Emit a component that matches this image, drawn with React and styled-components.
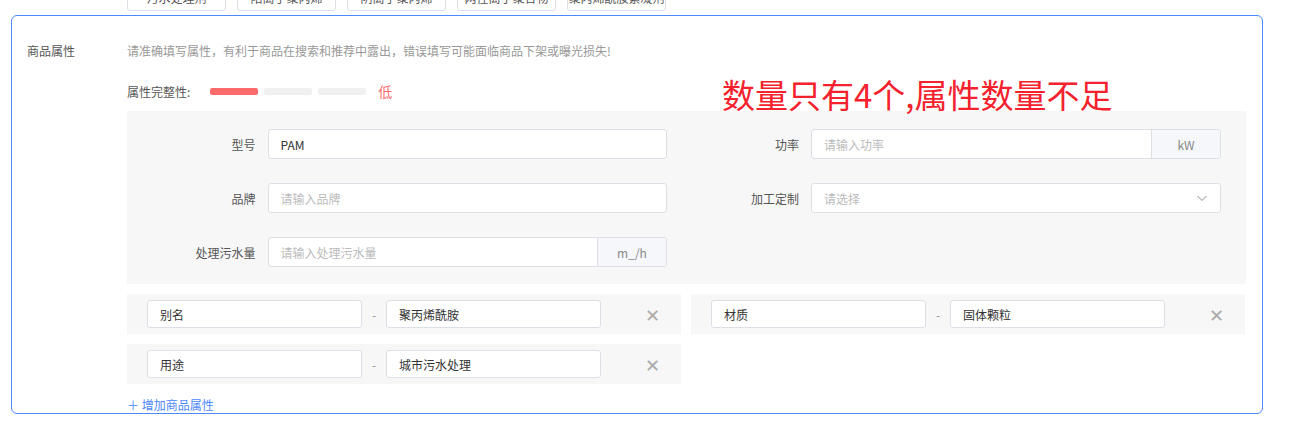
import styled, { createGlobalStyle } from 'styled-components';

const Global = createGlobalStyle`
  body { margin: 0; background: #fff; font-family: "Noto Sans CJK SC", "Liberation Sans", sans-serif; font-size: 12px; color: #333; }
`;

const Page = styled.div`
  height: 425px;
  overflow: hidden;
  position: relative;
`;

const TopBar = styled.div`
  display: flex;
  gap: 11px;
  padding-left: 127px;
  height: 11px;
  overflow: hidden;
`;

const TopBtn = styled.div`
  width: 99px;
  height: 28px;
  margin-top: -17px;
  border: 1px solid #dcdfe6;
  border-radius: 3px;
  display: flex;
  align-items: center;
  justify-content: center;
  font-size: 12px;
  color: #555;
  box-sizing: border-box;
  overflow: hidden;
  white-space: nowrap;
`;

const Card = styled.div`
  margin: 4px 0 0 11px;
  width: 1252px;
  height: 399px;
  box-sizing: border-box;
  border: 1px solid #4d88ff;
  border-radius: 6px;
  display: flex;
  padding: 26px 16px 0 15px;
`;

const SideLabel = styled.div`
  width: 100px;
  flex-shrink: 0;
  color: #555;
  line-height: 18px;
`;

const Body = styled.div`
  flex: 1;
  display: flex;
  flex-direction: column;
`;

const Hint = styled.div`
  color: #999;
  line-height: 18px;
`;

const Meter = styled.div`
  display: flex;
  align-items: center;
  margin-top: 22px;
  height: 18px;
  color: #555;
`;

const MeterLabel = styled.span`
  margin-right: 20px;
`;

const Seg = styled.div`
  width: 48px;
  height: 7px;
  border-radius: 2px;
  margin-right: 6px;
  background: ${p => (p.$on ? '#ff6b6b' : '#f0f0f0')};
`;

const Low = styled.span`
  color: #ff6b6b;
  font-size: 14px;
  margin-left: 6px;
`;

const Panel = styled.div`
  margin-top: 11px;
  background: #f7f7f7;
  height: 180px;
  box-sizing: border-box;
  padding-top: 18px;
  display: grid;
  grid-template-columns: 540px 554px;
  grid-auto-rows: 30px;
  row-gap: 24px;
`;

const Field = styled.div`
  display: flex;
  align-items: center;
`;

const FLabel = styled.div`
  width: 144px;
  padding-right: 12px;
  box-sizing: border-box;
  text-align: right;
  color: #555;
`;

const InputBox = styled.div`
  width: 410px;
  height: 30px;
  box-sizing: border-box;
  border: 1px solid #dcdfe6;
  border-radius: 3px;
  background: #fff;
  display: flex;
  align-items: center;
  overflow: hidden;
`;

const InText = styled.div`
  flex: 1;
  padding-left: 12px;
  color: ${p => (p.$ph ? '#bbb' : '#333')};
`;

const Addon = styled.div`
  width: 68px;
  height: 100%;
  background: #f5f7fa;
  border-left: 1px solid #dcdfe6;
  display: flex;
  align-items: center;
  justify-content: center;
  color: #888;
`;

const Custom = styled.div`
  margin-top: 10px;
  display: grid;
  grid-template-columns: 554px 554px;
  column-gap: 10px;
  row-gap: 10px;
`;

const CRow = styled.div`
  background: #f7f7f7;
  height: 40px;
  display: flex;
  align-items: center;
  padding-left: 20px;
`;

const Small = styled(InputBox)`
  width: 215px;
  height: 28px;
`;

const Dash = styled.div`
  width: 24px;
  text-align: center;
  color: #999;
`;

const Close = styled.div`
  margin-left: 44px;
  color: #aaa;
  font-size: 18px;
  line-height: 1;
`;

const AddLink = styled.div`
  margin-top: 13px;
  color: #4d88ff;
  line-height: 16px;
`;

const Note = styled.div`
  position: absolute;
  left: 722px;
  top: 70px;
  color: #f5222d;
  font-size: 33px;
`;

const fields = [
  { l: '型号', v: 'PAM' },
  { l: '功率', v: '请输入功率', ph: true, unit: 'kW' },
  { l: '品牌', v: '请输入品牌', ph: true },
  { l: '加工定制', v: '请选择', ph: true, sel: true },
  { l: '处理污水量', v: '请输入处理污水量', ph: true, unit: 'm_/h' },
];

const customs = [
  ['别名', '聚丙烯酰胺'],
  ['材质', '固体颗粒'],
  ['用途', '城市污水处理'],
];

export default function App() {
  return (
    <Page>
      <Global />
      <TopBar>
        {['污水处理剂', '阳离子聚丙烯', '阴离子聚丙烯', '两性离子聚合物', '聚丙烯酰胺絮凝剂'].map(t => (
          <TopBtn key={t}>{t}</TopBtn>
        ))}
      </TopBar>
      <Card>
        <SideLabel>商品属性</SideLabel>
        <Body>
          <Hint>请准确填写属性，有利于商品在搜索和推荐中露出，错误填写可能面临商品下架或曝光损失!</Hint>
          <Meter>
            <MeterLabel>属性完整性:</MeterLabel>
            <Seg $on /><Seg /><Seg />
            <Low>低</Low>
          </Meter>
          <Panel>
            {fields.map(f => (
              <Field key={f.l}>
                <FLabel>{f.l}</FLabel>
                <InputBox>
                  <InText $ph={f.ph}>{f.v}</InText>
                  {f.unit && <Addon>{f.unit}</Addon>}
                  {f.sel && (
                    <svg width="12" height="12" viewBox="0 0 12 12" style={{ marginRight: 12 }}>
                      <path d="M1.5 4l4.5 4.5L10.5 4" fill="none" stroke="#bbb" strokeWidth="1.2" />
                    </svg>
                  )}
                </InputBox>
              </Field>
            ))}
          </Panel>
          <Custom>
            {customs.map(([k, v]) => (
              <CRow key={k}>
                <Small><InText>{k}</InText></Small>
                <Dash>-</Dash>
                <Small><InText>{v}</InText></Small>
                <Close>✕</Close>
              </CRow>
            ))}
          </Custom>
          <AddLink>＋ 增加商品属性</AddLink>
        </Body>
      </Card>
      <Note>数量只有4个,属性数量不足</Note>
    </Page>
  );
}
